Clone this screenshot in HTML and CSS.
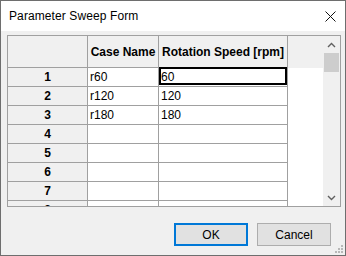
FILE: index.html
```html
<!DOCTYPE html>
<html>
<head>
<meta charset="utf-8">
<link rel="stylesheet" href="styles.css">
</head>
<body>
<div class="window">
  <div class="titlebar">
    <span class="title">Parameter Sweep Form</span>
    <svg class="close" width="11" height="11" viewBox="0 0 11 11"><path d="M0.5 0.5 L10.5 10.5 M10.5 0.5 L0.5 10.5" stroke="#111" stroke-width="1" fill="none"/></svg>
  </div>
  <div class="client">
    <div class="grid">
      <div class="table">
        <div class="cell hdr rh"></div>
        <div class="cell hdr">Case Name</div>
        <div class="cell hdr">Rotation Speed [rpm]</div>
        <div class="hdrfill"></div>

        <div class="cell rh">1</div><div class="cell">r60</div><div class="cell sel">60</div><div class="empty"></div>
        <div class="cell rh">2</div><div class="cell">r120</div><div class="cell">120</div><div class="empty"></div>
        <div class="cell rh">3</div><div class="cell">r180</div><div class="cell">180</div><div class="empty"></div>
        <div class="cell rh">4</div><div class="cell"></div><div class="cell"></div><div class="empty"></div>
        <div class="cell rh">5</div><div class="cell"></div><div class="cell"></div><div class="empty"></div>
        <div class="cell rh">6</div><div class="cell"></div><div class="cell"></div><div class="empty"></div>
        <div class="cell rh">7</div><div class="cell"></div><div class="cell"></div><div class="empty"></div>
        <div class="cell rh">8</div><div class="cell"></div><div class="cell"></div><div class="empty"></div>
      </div>
      <div class="scrollbar">
        <div class="arrow">
          <svg width="9" height="6" viewBox="0 0 9 6"><path d="M1 5 L4.5 1.5 L8 5" stroke="#606060" stroke-width="1.4" fill="none"/></svg>
        </div>
        <div class="track"><div class="thumb"></div></div>
        <div class="arrow">
          <svg width="9" height="6" viewBox="0 0 9 6"><path d="M1 1 L4.5 4.5 L8 1" stroke="#606060" stroke-width="1.4" fill="none"/></svg>
        </div>
      </div>
    </div>
    <div class="buttons">
      <button class="btn default">OK</button>
      <button class="btn">Cancel</button>
    </div>
  </div>
  <svg class="grip" width="10" height="10" viewBox="0 0 10 10">
    <rect x="7" y="1" width="2" height="2" fill="#b8b8b8"/>
    <rect x="4" y="4" width="2" height="2" fill="#b8b8b8"/>
    <rect x="7" y="4" width="2" height="2" fill="#b8b8b8"/>
    <rect x="1" y="7" width="2" height="2" fill="#b8b8b8"/>
    <rect x="4" y="7" width="2" height="2" fill="#b8b8b8"/>
    <rect x="7" y="7" width="2" height="2" fill="#b8b8b8"/>
  </svg>
</div>
</body>
</html>
```

FILE: styles.css
```css
* { box-sizing: border-box; }
html, body { margin: 0; padding: 0; }
body {
  font-family: "Liberation Sans", Arial, sans-serif;
  font-size: 12px;
  color: #000;
  background: #fff;
}
.window {
  position: relative;
  width: 346px;
  height: 256px;
  border: 1px solid #6e6e6e;
  display: flex;
  flex-direction: column;
  background: #f0f0f0;
  overflow: hidden;
}
.titlebar {
  height: 30px;
  background: #fff;
  display: flex;
  align-items: center;
  justify-content: space-between;
  padding: 0 9px 0 8px;
  flex: none;
}
.title { font-size: 12px; letter-spacing: 0.1px; }
.close { display: block; margin-top: 1px; }
.client {
  flex: 1;
  display: flex;
  flex-direction: column;
  padding: 4px 4px 0 6px;
}
.grid {
  height: 172px;
  border: 1px solid #a0a0a0;
  display: flex;
  background: #fff;
  flex: none;
}
.table {
  flex: 1;
  display: grid;
  grid-template-columns: 80px 71px 129px 1fr;
  grid-template-rows: 32px repeat(8, 19px);
  overflow: hidden;
  align-content: start;
}
.cell {
  border-right: 1px solid #a0a0a0;
  border-bottom: 1px solid #a0a0a0;
  display: flex;
  align-items: center;
  padding-left: 2px;
  white-space: nowrap;
  position: relative;
  background: #fff;
}
.hdr {
  background: #f0f0f0;
  font-weight: bold;
  justify-content: center;
  padding-left: 0;
  padding-top: 1px;
}
.rh {
  background: #f0f0f0;
  font-weight: bold;
  justify-content: center;
  padding-left: 0;
}
.hdrfill { background: #f0f0f0; }
.empty { background: #fff; }
.sel::after {
  content: "";
  position: absolute;
  top: -1px;
  left: 0;
  right: 0;
  bottom: 1px;
  border: 2px solid #000;
}
.scrollbar {
  width: 17px;
  flex: none;
  background: #f0f0f0;
  display: flex;
  flex-direction: column;
}
.arrow {
  height: 17px;
  display: flex;
  align-items: center;
  justify-content: center;
  flex: none;
}
.track {
  flex: 1;
  padding: 0 1px;
}
.thumb {
  height: 19px;
  background: #cdcdcd;
}
.buttons {
  margin-top: 16px;
  display: flex;
  justify-content: flex-end;
  gap: 9px;
  padding-right: 10px;
}
.btn {
  width: 74px;
  height: 23px;
  font-family: "Liberation Sans", Arial, sans-serif;
  font-size: 12px;
  color: #000;
  background: #e1e1e1;
  border: 1px solid #adadad;
  padding: 0;
  margin: 0;
}
.btn.default {
  border: 2px solid #0078d7;
}
.grip {
  position: absolute;
  right: 1px;
  bottom: 1px;
}
```
